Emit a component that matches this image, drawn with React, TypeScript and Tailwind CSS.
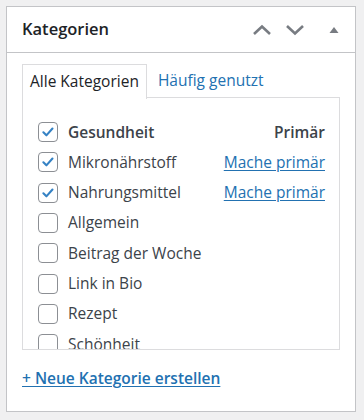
import React from "react";

const items = [
  { label: "Gesundheit", checked: true, primary: true },
  { label: "Mikronährstoff", checked: true, make: true },
  { label: "Nahrungsmittel", checked: true, make: true },
  { label: "Allgemein" },
  { label: "Beitrag der Woche" },
  { label: "Link in Bio" },
  { label: "Rezept" },
  { label: "Schönheit" },
];

function Box({ checked }: { checked?: boolean }) {
  return (
    <span className="w-[20px] h-[20px] shrink-0 rounded-[4px] border border-[#8c8f94] bg-white flex items-center justify-center">
      {checked && (
        <svg width="16" height="16" viewBox="0 0 20 20">
          <path d="M4.2 10.4 L8 14.2 L15.6 5.6" fill="none" stroke="#3582c4" strokeWidth="2.6" strokeLinecap="round" strokeLinejoin="round" />
        </svg>
      )}
    </span>
  );
}

export default function App() {
  return (
    <div
      className="w-[364px] h-[420px] bg-[#f0f0f1] pt-[6px] pl-[6px] pr-[8px] overflow-hidden"
      style={{ fontFamily: '"Open Sans", "Noto Sans", sans-serif' }}
    >
      <div className="h-[406px] border border-[#c3c4c7] bg-white flex flex-col">
        <div className="h-[46px] border-b border-[#c3c4c7] flex items-center pl-[15px] pr-[16px]">
          <h2 className="text-[16.5px] font-semibold text-[#1d2327] flex-1 leading-none">Kategorien</h2>
          <div className="flex items-center">
            <svg width="22" height="14" viewBox="0 0 22 14" className="mr-[11px]">
              <path d="M3 11 L11 3.5 L19 11" fill="none" stroke="#787c82" strokeWidth="2.6" />
            </svg>
            <svg width="22" height="14" viewBox="0 0 22 14" className="mr-[23px]">
              <path d="M3 3 L11 10.5 L19 3" fill="none" stroke="#787c82" strokeWidth="2.6" />
            </svg>
            <svg width="10" height="8" viewBox="0 0 10 8">
              <path d="M0.5 7 L5 1 L9.5 7 Z" fill="#787c82" />
            </svg>
          </div>
        </div>
        <div className="pt-[10px] px-[15px]">
          <div className="flex items-end h-[35px]">
            <div className="h-[35px] px-[7px] border border-b-0 border-[#dcdcde] bg-white text-[15.5px] text-[#1d2327] flex items-center relative z-10 -mb-px">
              Alle Kategorien
            </div>
            <div className="h-[34px] px-[11px] text-[15.5px] text-[#2271b1] flex items-center border-b border-[#dcdcde] flex-1">
              Häufig genutzt
            </div>
          </div>
          <div className="h-[252px] border border-t-0 border-[#dcdcde] overflow-hidden pt-[19px] pl-[15px] pr-[14px]">
            {items.map((it) => (
              <div key={it.label} className="h-[30.3px] flex items-center">
                <Box checked={it.checked} />
                <span className={"ml-[10px] text-[15.5px] text-[#3c434a] flex-1 whitespace-nowrap " + (it.primary ? "font-semibold" : "")}>
                  {it.label}
                </span>
                {it.primary && <span className="text-[15.5px] font-semibold text-[#3c434a]">Primär</span>}
                {it.make && <span className="text-[15.5px] text-[#2271b1] underline underline-offset-2">Mache primär</span>}
              </div>
            ))}
          </div>
          <div className="mt-[17px] text-[15.5px] font-semibold text-[#2271b1] underline underline-offset-2">
            + Neue Kategorie erstellen
          </div>
        </div>
      </div>
    </div>
  );
}
